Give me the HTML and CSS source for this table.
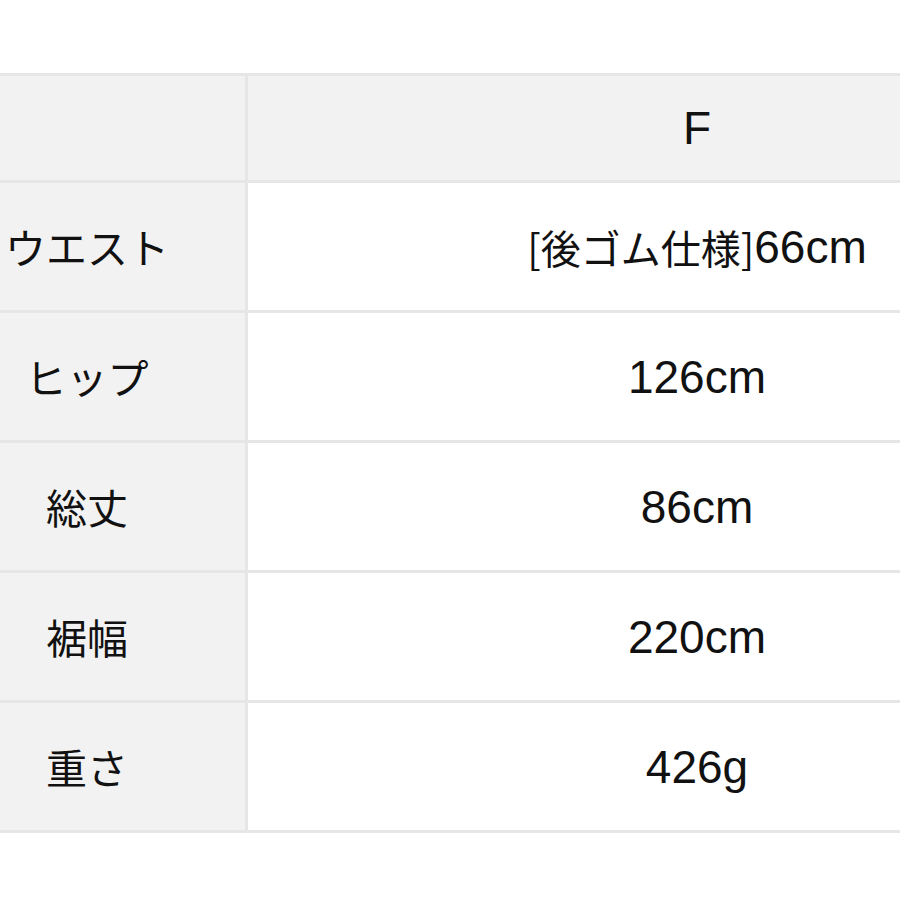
FILE: index.html
```
<!DOCTYPE html>
<html lang="ja">
<head>
<meta charset="utf-8">
<link rel="stylesheet" href="styles.css">
</head>
<body>
<div class="table">
  <div class="cell head label"></div>
  <div class="cell head value">F</div>

  <div class="cell label">ウエスト</div>
  <div class="cell value"><span class="jp">[後ゴム仕様]</span>66cm</div>

  <div class="cell label">ヒップ</div>
  <div class="cell value">126cm</div>

  <div class="cell label">総丈</div>
  <div class="cell value">86cm</div>

  <div class="cell label">裾幅</div>
  <div class="cell value">220cm</div>

  <div class="cell label">重さ</div>
  <div class="cell value">426g</div>
</div>
</body>
</html>
```
FILE: styles.css
```
html, body {
  margin: 0;
  padding: 0;
  background: #ffffff;
  overflow: hidden;
}

body {
  width: 900px;
  height: 900px;
  font-family: "Liberation Sans", "Noto Sans CJK JP", sans-serif;
  color: #111111;
}

.table {
  margin-top: 73px;
  display: grid;
  grid-template-columns: 245px 1fr;
  grid-template-rows: 104px repeat(5, 127px);
  gap: 3px;
  padding: 3px 0;
  background: #e6e6e6;
}

.cell {
  display: flex;
  align-items: center;
  justify-content: center;
  line-height: 1;
}

.label {
  background: #f2f2f2;
  padding-right: 71px;
  font-family: "Noto Sans CJK JP", sans-serif;
  font-size: 41px;
}

.value {
  background: #ffffff;
  padding-left: 246px;
  font-size: 46px;
}

.head.value {
  background: #f2f2f2;
}

.jp {
  font-family: "Noto Sans CJK JP", sans-serif;
  font-size: 40px;
}
```
